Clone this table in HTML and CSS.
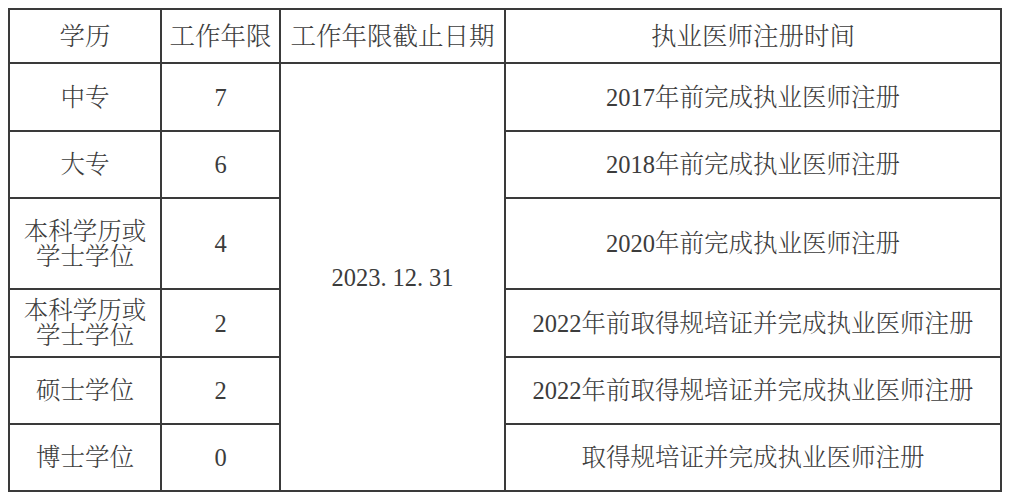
FILE: index.html
```html
<!DOCTYPE html>
<html lang="zh-CN">
<head>
<meta charset="utf-8">
<link rel="stylesheet" href="styles.css">
</head>
<body>
<table class="grid">
  <colgroup>
    <col class="c1"><col class="c2"><col class="c3"><col class="c4">
  </colgroup>
  <tr class="head">
    <td>学历</td><td>工作年限</td><td>工作年限截止日期</td><td>执业医师注册时间</td>
  </tr>
  <tr class="r1">
    <td>中专</td><td>7</td>
    <td rowspan="6">2023<span class="dot">.</span>12<span class="dot">.</span>31</td>
    <td>2017年前完成执业医师注册</td>
  </tr>
  <tr class="r2">
    <td>大专</td><td>6</td><td>2018年前完成执业医师注册</td>
  </tr>
  <tr class="r3">
    <td class="two">本科学历或<br>学士学位</td><td>4</td><td>2020年前完成执业医师注册</td>
  </tr>
  <tr class="r4">
    <td class="two">本科学历或<br>学士学位</td><td>2</td><td>2022年前取得规培证并完成执业医师注册</td>
  </tr>
  <tr class="r5">
    <td>硕士学位</td><td>2</td><td>2022年前取得规培证并完成执业医师注册</td>
  </tr>
  <tr class="r6">
    <td>博士学位</td><td>0</td><td>取得规培证并完成执业医师注册</td>
  </tr>
</table>
</body>
</html>
```
FILE: styles.css
```css
html, body {
  margin: 0;
  padding: 0;
  background: #ffffff;
}
body {
  padding: 8px 0 0 8px;
}
.grid {
  border-collapse: collapse;
  table-layout: fixed;
  width: 992px;
  font-family: "Liberation Serif", "Noto Serif CJK SC", "Noto Sans CJK SC", serif;
  font-size: 24.5px;
  font-weight: 300;
  color: #3c3c3c;
}
.c1 { width: 152px; }
.c2 { width: 119px; }
.c3 { width: 225px; }
.c4 { width: 496px; }
.grid td {
  border: 2px solid #3a3a3a;
  text-align: center;
  vertical-align: middle;
  padding: 0;
  line-height: 25px;
}
.head td {
  font-size: 25.5px;
}
.head { height: 54px; }
.r1 { height: 68px; }
.r2 { height: 67px; }
.r3 { height: 91px; }
.r4 { height: 68px; }
.r5 { height: 67px; }
.r6 { height: 67px; }
.dot {
  display: inline-block;
  width: 12px;
  text-align: left;
}
```
